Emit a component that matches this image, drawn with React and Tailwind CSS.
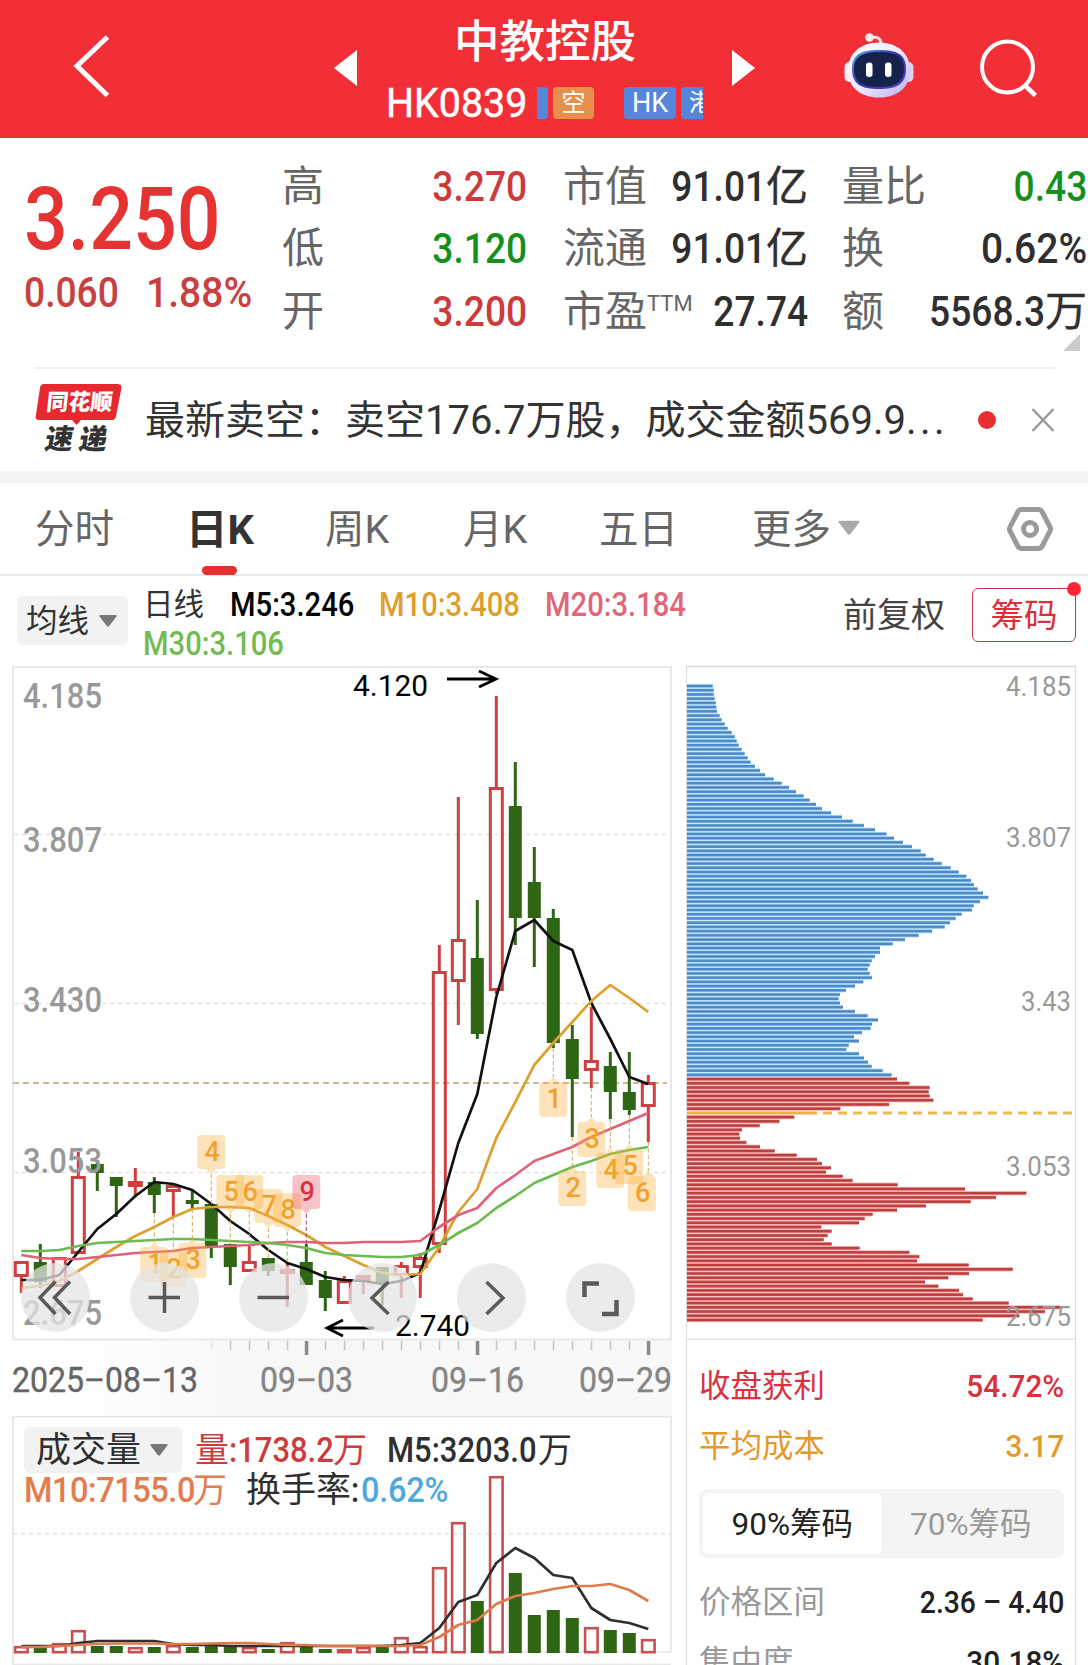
import clsx from 'clsx';

const STEP = 19;
const FIRST_X = 21.3;
const cx = (i) => FIRST_X + i * STEP;

// [up, high, bodyTop, bodyBottom, low]
const candles = [
    [1, 1261, 1261, 1277, 1293],
    [0, 1244, 1262, 1282, 1288],
    [1, 1257, 1257, 1287, 1287],
    [1, 1152, 1176, 1254, 1254],
    [0, 1160, 1164, 1173, 1191],
    [0, 1177, 1177, 1186, 1217],
    [1, 1168, 1181, 1187, 1197],
    [0, 1177, 1182, 1195, 1213],
    [1, 1185, 1185, 1192, 1217],
    [0, 1191, 1200, 1204, 1209],
    [0, 1204, 1204, 1246, 1258],
    [0, 1244, 1244, 1267, 1285],
    [1, 1246, 1261, 1272, 1272],
    [0, 1258, 1258, 1271, 1276],
    [1, 1262, 1269, 1272, 1307],
    [0, 1244, 1262, 1285, 1285],
    [0, 1271, 1280, 1298, 1311],
    [1, 1276, 1280, 1304, 1304],
    [1, 1275, 1275, 1281, 1294],
    [0, 1267, 1267, 1284, 1305],
    [1, 1262, 1265, 1276, 1298],
    [1, 1253, 1257, 1268, 1298],
    [1, 945, 971, 1245, 1253],
    [1, 797, 939, 982, 1025],
    [0, 900, 958, 1034, 1039],
    [1, 696, 787, 991, 994],
    [0, 762, 806, 918, 945],
    [0, 847, 882, 918, 967],
    [0, 909, 918, 1043, 1048],
    [0, 1025, 1039, 1079, 1137],
    [1, 1007, 1060, 1071, 1088],
    [0, 1052, 1066, 1092, 1119],
    [0, 1052, 1092, 1110, 1115],
    [1, 1075, 1082, 1107, 1142],
];

const ma5 = [1280, 1280, 1275, 1252, 1229, 1214, 1196, 1182, 1184, 1190, 1204, 1221, 1234, 1250, 1263, 1269, 1277, 1280, 1281, 1284, 1281, 1273, 1210, 1143, 1094, 997, 931, 920, 941, 950, 1003, 1039, 1077, 1084];
const ma10 = [1288, 1286, 1281, 1271, 1259, 1247, 1236, 1227, 1217, 1209, 1207, 1207, 1208, 1216, 1225, 1235, 1247, 1256, 1265, 1273, 1275, 1274, 1247, 1212, 1189, 1138, 1102, 1065, 1043, 1022, 1001, 985, 998, 1012];
const ma20 = [1255, 1258, 1259, 1259, 1257, 1255, 1253, 1252, 1251, 1248, 1247, 1246, 1245, 1243, 1242, 1242, 1243, 1243, 1242, 1242, 1242, 1241, 1227, 1215, 1208, 1188, 1175, 1161, 1154, 1147, 1137, 1129, 1121, 1113];
const ma30 = [1251, 1251, 1250, 1246, 1243, 1242, 1241, 1240, 1239, 1239, 1240, 1241, 1242, 1243, 1245, 1248, 1253, 1255, 1256, 1257, 1257, 1255, 1245, 1233, 1223, 1208, 1196, 1183, 1175, 1167, 1161, 1154, 1150, 1147];

const volumes = [1646, 1648, 1643, 1630, 1646, 1646, 1647, 1647, 1645, 1647, 1646, 1647, 1647, 1649, 1642, 1646, 1649, 1649, 1647, 1647, 1637, 1646, 1567, 1522, 1601, 1476, 1573, 1615, 1610, 1618, 1627, 1630, 1633, 1639];
const vol5 = [1646, 1646, 1646, 1643, 1641, 1641, 1641, 1641, 1644, 1645, 1645, 1646, 1646, 1646, 1646, 1646, 1646, 1646, 1646, 1646, 1645, 1643, 1628, 1602, 1595, 1563, 1548, 1558, 1575, 1578, 1608, 1620, 1623, 1629];
const vol10 = [1647, 1647, 1646, 1645, 1644, 1643.5, 1643.5, 1643.5, 1644, 1644, 1643.5, 1643, 1643, 1644, 1645, 1645, 1646, 1646, 1646, 1646, 1646, 1645, 1637, 1625, 1620, 1604, 1596, 1593, 1589, 1586, 1586, 1584, 1590, 1601];

// chip distribution, one entry per price level
const chips = [
    98, 101, 101, 104, 107, 109, 111, 119, 125, 134, 143, 155, 164, 170, 176, 185, 194, 203, 212, 225,
    240, 255, 281, 305, 327, 348, 371, 389, 408, 426, 453, 486, 518, 552, 585, 620, 642, 669, 696, 722,
    737, 761, 785, 812, 836, 859, 873, 882, 893, 909, 925, 900, 881, 876, 845, 827, 810, 794, 756, 716,
    675, 638, 600, 600, 585, 575, 569, 563, 569, 576, 550, 525, 498, 480, 476, 480, 489, 525, 563, 594,
    576, 572, 546, 522, 537, 506, 499, 537, 552, 564, 575, 608, 635, 651, 688, 749, 746, 749, 760, 627,
    481, 410, 343, 298, 239, 186, 178, 180, 199, 240, 284, 350, 411, 426, 453, 438, 488, 518, 653, 855,
    1039, 948, 872, 738, 651, 578, 554, 537, 424, 455, 443, 431, 455, 539, 688, 718, 711, 866, 998, 867,
    805, 735, 775, 837, 849, 878, 986, 1140, 1095, 1018, 908,
];
const CHIP_TOP = 686;
const CHIP_STEP = 4.2267;
const LAST_BLUE = 92;

// [label, candle index, box top, direction, offset]
const marks = [
    ['1', 7, 1247, 'up'],
    ['2', 8, 1252, 'up'],
    ['3', 9, 1243, 'up'],
    ['4', 10, 1135, 'down'],
    ['5', 11, 1175, 'down'],
    ['6', 12, 1175, 'down'],
    ['7', 13, 1189, 'down'],
    ['8', 14, 1193, 'down'],
    ['9', 15, 1175, 'down'],
    ['1', 28, 1082, 'up'],
    ['2', 29, 1171, 'up'],
    ['3', 30, 1122, 'up'],
    ['4', 31, 1153, 'up'],
    ['5', 32, 1149, 'up'],
    ['6', 33, 1176, 'up', -6.5],
];

const toPoints = (ys) => ys.map((y, i) => `${cx(i)},${y}`).join(' ');

const Num = ({ className, right, wide, children }) => (
    <span className={clsx('inline-flex whitespace-nowrap', right && 'justify-end', className)}>
        <span
            className={clsx(
                'inline-block',
                wide ? 'scale-x-[0.93]' : 'scale-x-[0.885]',
                right ? 'origin-right' : 'origin-left'
            )}
        >
            {children}
        </span>
    </span>
);

const Caret = ({ className }) => (
    <svg viewBox="0 0 18 12" className={className} fill="currentColor">
        <path d="M1 0H17Q18 .6 17.4 1.6L10 11.2Q9 12 8 11.2L.6 1.6Q0 .6 1 0Z" />
    </svg>
);

const Header = () => (
    <header className="flex h-[138px] shrink-0 items-start bg-[#f22f37] text-white">
        <svg viewBox="0 0 40 66" className="ml-[72px] mt-[33px] h-[66px] w-10" fill="none" stroke="white" strokeWidth="5">
            <path d="M35.500 4L5 33L35.500 62.500" />
        </svg>
        <svg viewBox="0 0 23 36" className="ml-[222px] mt-[50px] h-9 w-[23px]" fill="white">
            <path d="M0 18L23 0V36Z" />
        </svg>
        <div className="ml-[29px] flex w-[318px] flex-col items-center">
            <h1 className="mt-[19px] text-[45.500px] leading-[48px] font-medium">中教控股</h1>
            <div className="mt-[20px] flex h-8 w-full items-center">
                <span className="inline-block w-[151px] whitespace-nowrap text-[41px] leading-8">
                    <span className="inline-block origin-left scale-x-[0.96] [-webkit-text-stroke:0.5px_white]">HK0839</span>
                </span>
                <div className="flex w-[166px] overflow-hidden text-[24px] leading-8">
                    <span className="h-8 w-[11px] shrink-0 rounded-r-sm bg-[#5486db]" />
                    <span className="ml-[5px] h-8 w-[41px] shrink-0 rounded-sm bg-[#e88f4c] text-center">空</span>
                    <span className="ml-[30px] h-8 w-[52px] shrink-0 rounded-sm bg-[#5486db] text-center text-[27px]">HK</span>
                    <span className="ml-[5px] h-8 w-[60px] shrink-0 rounded-sm bg-[#5486db] pl-2">港</span>
                </div>
            </div>
        </div>
        <svg viewBox="0 0 23 36" className="ml-[28px] mt-[50px] h-9 w-[23px]" fill="white">
            <path d="M23 18L0 0V36Z" />
        </svg>
        <svg viewBox="0 0 70 66" className="ml-[89px] mt-[32px] h-[66px] w-[70px]">
            <defs>
                <linearGradient id="shell" x1="0" y1="0" x2="1" y2="1">
                    <stop offset="0" stopColor="#ffffff" />
                    <stop offset=".5" stopColor="#f0eafc" />
                    <stop offset="1" stopColor="#b9aef0" />
                </linearGradient>
                <linearGradient id="rim" x1="0" y1="0" x2="1" y2="1">
                    <stop offset="0" stopColor="#4fa9dd" />
                    <stop offset=".5" stopColor="#3b2fae" />
                    <stop offset="1" stopColor="#5a3fc4" />
                </linearGradient>
            </defs>
            <path d="M26 6C33 4 37 6 37 12" fill="none" stroke="#f6dfe6" strokeWidth="3" />
            <circle cx="25.500" cy="5.500" r="4.300" fill="#fbe9ee" />
            <rect x="0.500" y="30" width="10" height="20" rx="5" fill="#f3ecfb" />
            <rect x="59.500" y="30" width="10" height="20" rx="5" fill="#d9d2f6" />
            <path d="M35 10.500C54 10.500 66 22 66 38C66 55 54 65.500 35 65.500C16 65.500 4 55 4 38C4 22 16 10.500 35 10.500Z" fill="url(#shell)" />
            <path d="M35 18C54 18 62 23 62 37C62 52 53 57 35 57C17 57 8 52 8 37C8 23 16 18 35 18Z" fill="url(#rim)" />
            <path d="M35 20C52 20 60 25 60 37C60 50 51 55 35 55C19 55 10 50 10 37C10 25 18 20 35 20Z" fill="#15234a" />
            <rect x="22" y="30.500" width="6.500" height="14.500" rx="3" fill="white" />
            <rect x="41" y="30.500" width="6.500" height="14.500" rx="3" fill="white" />
        </svg>
        <svg viewBox="0 0 60 60" className="ml-[65px] mt-[38px] h-[60px] w-[60px]" fill="none" stroke="white" strokeWidth="4">
            <circle cx="28.500" cy="29" r="25.500" />
            <path d="M46 47.500L56.500 57.500" strokeWidth="4.500" />
        </svg>
    </header>
);

const Stat = ({ label, sup, value, unit, wide, tone = 'text-[#2f2f2f]' }) => (
    <div className="flex h-[62.500px] items-center justify-between">
        <span className="flex text-[42px] text-[#666]">
            {label}
            {sup && <span className="mt-[7px] text-[22px]">{sup}</span>}
        </span>
        <span className={clsx('flex items-baseline text-[42px] font-medium', tone)}>
            <Num right wide={wide}>{value}</Num>
            {unit && <span className="text-[42px] font-normal [-webkit-text-stroke:0.4px_#2f2f2f]">{unit}</span>}
        </span>
    </div>
);

const Quote = () => (
    <section className="relative flex h-[229px] shrink-0 pt-[17px]">
        <div className="w-[282px] pl-[24px] font-medium">
            <div className="mt-[21px] h-[86px] text-[87px] leading-[86px] text-[#e53232]">
                <Num>3.250</Num>
            </div>
            <div className="mt-[6px] flex text-[42px] leading-[50px] text-[#c94040]">
                <Num className="w-[122px]">0.060</Num>
                <Num wide className="w-[102px]">1.88%</Num>
            </div>
        </div>
        <div className="w-[245px]">
            <Stat label="高" value="3.270" tone="text-[#cc3b3b]" />
            <Stat label="低" value="3.120" tone="text-[#14901b]" />
            <Stat label="开" value="3.200" tone="text-[#cc3b3b]" />
        </div>
        <div className="ml-9 w-[245px]">
            <Stat label="市值" value="91.01" unit="亿" />
            <Stat label="流通" value="91.01" unit="亿" />
            <Stat label="市盈" sup="TTM" value="27.74" />
        </div>
        <div className="ml-[34px] w-[245px]">
            <Stat label="量比" value="0.43" tone="text-[#14901b]" />
            <Stat label="换" value="0.62%" wide />
            <Stat label="额" value="5568.3" unit="万" />
        </div>
        <svg viewBox="0 0 17 17" className="absolute right-2 top-[196px] h-[17px] w-[17px]" fill="#cccccc">
            <path d="M17 0V17H0Z" />
        </svg>
    </section>
);

const News = () => (
    <section className="ml-[35px] mr-[33px] flex h-[104px] shrink-0 items-center border-t-2 border-[#efefef]">
        <svg viewBox="0 0 88 76" className="-mt-1 h-[76px] w-[88px] shrink-0 overflow-visible font-['Noto_Sans_CJK_SC',sans-serif]">
            <path d="M9 4H82Q87 4 86.500 8L81 36Q80.500 40 77 40H46L41.500 45L37 40H4Q0 40 .8 36L5 8Q5.500 4 9 4Z" fill="#e5292e" />
            <text x="14" y="30.500" transform="skewX(-6)" fill="white" fontSize="22.500" fontWeight="900" textLength="66" lengthAdjust="spacingAndGlyphs">同花顺</text>
            <text x="21" y="69" transform="skewX(-10)" fill="#333" fontSize="28" fontWeight="900">速</text>
            <text x="55" y="69" transform="skewX(-10)" fill="#333" fontSize="28" fontWeight="900">递</text>
        </svg>
        <p className="ml-[22px] mt-[2px] flex-1 whitespace-nowrap text-[40px] leading-[60px] text-[#333]">
            最新卖空：卖空176.7万股，成交金额569.9<span className="tracking-[3.500px]">...</span>
        </p>
        <span className="mr-[35px] h-[18px] w-[18px] shrink-0 rounded-full bg-[#e83030]" />
        <svg viewBox="0 0 24 24" className="h-6 w-6 shrink-0" fill="none" stroke="#999" strokeWidth="2.500">
            <path d="M1.500 1L22.500 23M22.500 1L1.500 23" />
        </svg>
    </section>
);

const Tabs = () => (
    <nav className="flex h-[93px] shrink-0 items-center border-b-2 border-[#e8e8e8] pl-[35px] text-[39.500px] text-[#666]">
        <span className="mt-[3px] w-[151px]">分时</span>
        <span className="relative mt-[3px] w-[139px] text-[41.500px] font-bold text-[#333]">
            日K
            <i className="absolute -bottom-[14px] left-4 h-[9px] w-[35px] rounded-full bg-[#e53030]" />
        </span>
        <span className="mt-[3px] w-[138px]">周K</span>
        <span className="mt-[3px] w-[136px]">月K</span>
        <span className="mt-[3px] w-[153px]">五日</span>
        <span className="mt-[3px] w-[86px]">更多</span>
        <Caret className="h-[18px] w-[22px] -mt-[2px] text-[#aaa]" />
        <svg viewBox="0 0 46 44" className="ml-[147px] h-11 w-[46px]" fill="none" stroke="#9a9a9a" strokeWidth="5" strokeLinejoin="round">
            <path d="M14 2.500H32Q34 3 35 4.500L43 20Q44 22 43 24L35 39.500Q34 41 32 41.500H14Q12 41 11 39.500L3 24Q2 22 3 20L11 4.500Q12 3 14 2.500Z" />
            <circle cx="23" cy="22" r="6.500" />
        </svg>
    </nav>
);

const Averages = () => (
    <section className="flex h-[84px] shrink-0">
        <button className="ml-[17px] mt-5 flex h-[49px] w-[111px] items-center gap-[10px] rounded-md bg-[#f2f2f2] pl-[9px] text-[31.500px] text-[#333]">
            <span className="mt-[2px]">均线</span>
            <Caret className="h-3 w-[18px] text-[#777]" />
        </button>
        <div className="ml-[15px] mt-[9px] w-[700px] text-[33px] leading-[39px] font-medium">
            <div className="flex">
                <span className="w-[87px] text-[30.500px] font-normal text-[#333]">日线</span>
                <Num className="w-[149px] text-black">M5:3.246</Num>
                <Num className="w-[166px] text-[#dda02c]">M10:3.408</Num>
                <Num className="text-[#e0667a]">M20:3.184</Num>
            </div>
            <Num className="text-[#72bb54]">M30:3.106</Num>
        </div>
        <span className="mt-[15px] w-[129px] text-[34px] leading-[48px] text-[#444]">前复权</span>
        <button className="relative mt-3 h-[54px] w-[104px] rounded-md border border-[#c03a44] pt-[2px] text-[33.500px] leading-[50px] text-[#dc2f3c]">
            筹码
            <i className="absolute -right-[6px] -top-[7px] h-[14px] w-[14px] rounded-full bg-[#ff2535]" />
        </button>
    </section>
);

const Candle = ({ x, data: [up, high, top, bottom, low] }) =>
    up ? (
        <g stroke="#cf3f3f" strokeWidth="3" fill="none">
            <path d={`M${x} ${high}V${top}M${x} ${bottom}V${low}`} />
            <rect x={x - 6} y={top + 1.5} width="12" height={Math.max(bottom - top - 3, 2)} />
        </g>
    ) : (
        <g fill="#2f6614">
            <rect x={x - 1.5} y={high} width="3" height={low - high} />
            <rect x={x - 6.5} y={top} width="13" height={bottom - top} />
        </g>
    );

const Mark = ({ label, i, top, dir, shift = 0 }) => {
    const x = cx(i);
    const left = x - 14 + shift;
    const hot = label === '9';
    const fill = hot ? '#ea5b6c' : '#fbb040';
    const up = dir === 'up';
    return (
        <g>
            <path
                d={up ? `M${x} ${candles[i][4]}V${top - 5}` : `M${x} ${top + 39}V${candles[i][1]}`}
                stroke={hot ? '#b04050' : '#d5a64a'}
                strokeDasharray="4 2.5"
            />
            <g fill={fill} opacity={0.37}>
                <path
                    d={
                        up
                            ? `M${left + 4} ${top}H${x - 5}L${x} ${top - 5}L${x + 5} ${top}H${left + 24}Q${left + 28} ${top} ${left + 28} ${top + 4}V${top + 31}Q${left + 28} ${top + 35} ${left + 24} ${top + 35}H${left + 4}Q${left} ${top + 35} ${left} ${top + 31}V${top + 4}Q${left} ${top} ${left + 4} ${top}Z`
                            : `M${left + 4} ${top}H${left + 24}Q${left + 28} ${top} ${left + 28} ${top + 4}V${top + 30}Q${left + 28} ${top + 34} ${left + 24} ${top + 34}H${x + 5}L${x} ${top + 39}L${x - 5} ${top + 34}H${left + 4}Q${left} ${top + 34} ${left} ${top + 30}V${top + 4}Q${left} ${top} ${left + 4} ${top}Z`
                    }
                />
            </g>
            <text x={left + 15} y={top + 26} textAnchor="middle" fontSize="27" fontWeight="500" fill={hot ? '#d8343f' : '#f0a22e'}>
                {label}
            </text>
        </g>
    );
};

const ToolButton = ({ children }) => (
    <button className="flex h-[69px] w-[69px] items-center justify-center rounded-full bg-[#e4e4e4]/75">
        <svg viewBox="0 0 69 69" className="h-full w-full" fill="none" stroke="#5a5a5a" strokeWidth="3.500">
            {children}
        </svg>
    </button>
);

const PriceChart = () => (
    <div className="relative h-[756px]">
        <svg viewBox="0 660 686 756" className="block h-[756px] w-[686px]">
            <defs>
                <linearGradient id="axis" x1="0" x2="1">
                    <stop offset="0.050" stopColor="#ffffff" />
                    <stop offset="0.400" stopColor="#f7f7f7" />
                    <stop offset="1" stopColor="#f8f8f8" />
                </linearGradient>
            </defs>
            <rect x="13" y="1340" width="659" height="76" fill="url(#axis)" />
            <rect x="13" y="667" width="658" height="672.500" fill="white" stroke="#e8e8e8" strokeWidth="2" />
            <g stroke="#e4e4e4" strokeWidth="1.500" strokeDasharray="4 4">
                <path d="M14 834.500H670M14 1003.500H670M14 1172.500H670" />
            </g>
            <path d="M13 1083H667" stroke="#bba26b" strokeWidth="1.600" strokeDasharray="6 4" />

            {candles.map((c, i) => (
                <Candle key={i} x={cx(i)} data={c} />
            ))}

            <g fill="#999" fontSize="35" fontWeight="500">
                <text x="23" y="708" textLength="79" lengthAdjust="spacingAndGlyphs">4.185</text>
                <text x="23" y="852" textLength="79" lengthAdjust="spacingAndGlyphs">3.807</text>
                <text x="23" y="1012" textLength="79" lengthAdjust="spacingAndGlyphs">3.430</text>
                <text x="23" y="1173" textLength="79" lengthAdjust="spacingAndGlyphs">3.053</text>
                <text x="23" y="1325" textLength="79" lengthAdjust="spacingAndGlyphs">2.675</text>
            </g>

            <g fill="none" strokeWidth="2.700" strokeLinejoin="round">
                <polyline points={toPoints(ma5)} stroke="#111" />
                <polyline points={toPoints(ma10)} stroke="#dca030" />
                <polyline points={toPoints(ma20)} stroke="#df6378" />
                <polyline points={toPoints(ma30)} stroke="#6cbb50" />
            </g>

            {marks.map(([label, i, top, dir, shift], k) => (
                <Mark key={k} label={label} i={i} top={top} dir={dir} shift={shift} />
            ))}

            <g fill="black" fontSize="29.500">
                <text x="353" y="696" textLength="75" lengthAdjust="spacingAndGlyphs">4.120</text>
                <text x="395" y="1336" textLength="75" lengthAdjust="spacingAndGlyphs">2.740</text>
            </g>
            <g fill="none" stroke="black" strokeWidth="2.800">
                <path d="M447 679H496M479 671L496 679L479 687" />
                <path d="M374 1328H327M343 1320L327 1328L343 1336" />
            </g>

            {candles.map((_, i) => {
                if (i < 10) return null;
                const major = i === 15 || i === 24 || i === 33;
                return (
                    <rect
                        key={i}
                        x={cx(i) - (major ? 1.5 : 0.5)}
                        y="1341"
                        width={major ? 3.5 : 1.5}
                        height={major ? 14 : 9}
                        fill={major ? '#8a8a8a' : i === 10 ? '#e6e6e6' : '#c4c4c4'}
                    />
                );
            })}
            <g fontSize="35" fill="#858585" stroke="#858585" strokeWidth="0.400">
                <text x="12" y="1392" textLength="186" lengthAdjust="spacingAndGlyphs" fill="#666" stroke="#666">2025–08–13</text>
                <text x="260" y="1392" textLength="93" lengthAdjust="spacingAndGlyphs">09–03</text>
                <text x="431" y="1392" textLength="93" lengthAdjust="spacingAndGlyphs">09–16</text>
                <text x="579" y="1392" textLength="93" lengthAdjust="spacingAndGlyphs">09–29</text>
            </g>
        </svg>
        {/* Zoom and pan controls */}
        <div className="absolute left-[21px] top-[603px] flex gap-10">
            <ToolButton>
                <path d="M34.500 18.500L19 34.500L34.500 51M49 18.500L33.500 34.500L49 51" />
            </ToolButton>
            <ToolButton>
                <path d="M18.500 34.500H50M34.500 19V50" />
            </ToolButton>
            <ToolButton>
                <path d="M18.500 34.500H50" />
            </ToolButton>
            <ToolButton>
                <path d="M40.500 19L24 35L40.500 51" />
            </ToolButton>
            <ToolButton>
                <path d="M29.500 19L46 35L29.500 51" />
            </ToolButton>
            <ToolButton>
                <path d="M18.500 34V20.500H33M36 51H50.500V37" strokeWidth="4.500" />
            </ToolButton>
        </div>
    </div>
);

const VolumeChart = () => (
    <div className="relative h-[249px]">
        <svg viewBox="0 1416 686 249" className="block h-[249px] w-[686px]">
            <path d="M13 1652H671" stroke="#e8e8e8" strokeWidth="1.500" />
            <path d="M13 1665V1416.500H671V1652" fill="none" stroke="#e8e8e8" strokeWidth="2" />
            <path d="M13 1664.500H671" stroke="#e8e8e8" strokeWidth="2" />
            <path d="M13 1534H671" stroke="#e4e4e4" strokeWidth="1.500" strokeDasharray="4 4" />
            {volumes.map((top, i) =>
                candles[i][0] ? (
                    <rect key={i} x={cx(i) - 6.2} y={top + 1.2} width="12.500" height={Math.max(1651 - top, 2)} fill="none" stroke="#c75050" strokeWidth="2.600" />
                ) : (
                    <rect key={i} x={cx(i) - 6.5} y={top} width="13" height={1653 - top} fill="#2f6614" />
                )
            )}
            <g fill="none" strokeWidth="2.700" strokeLinejoin="round">
                <polyline points={toPoints(vol5)} stroke="#2f2f2f" />
                <polyline points={toPoints(vol10)} stroke="#df7a4c" />
            </g>
        </svg>
        <div className="absolute left-6 top-[11px] text-[35px] font-medium text-[#2f2f2f]">
            <div className="flex h-[46px] items-center">
                <button className="flex h-[46px] w-[158px] items-center gap-[9px] rounded-md bg-[#f2f2f2] pl-[12px] font-normal">
                    <span className="mt-[2px]">成交量</span>
                    <Caret className="h-3 w-[18px] text-[#777]" />
                </button>
                <span className="ml-[13px] mt-[2px] flex text-[#cb3d3d]">
                    <span className="text-[34px] font-normal">量</span>
                    <Num className="w-[104px]">:1738.2</Num>
                    <span className="text-[34px] font-normal">万</span>
                </span>
                <span className="ml-[20px] mt-[2px] flex">
                    <Num className="w-[151px]">M5:3203.0</Num>
                    <span className="text-[34px] font-normal">万</span>
                </span>
            </div>
            <div className="-mt-[5px] flex h-[46px] items-center">
                <span className="flex text-[#e37c4e]">
                    <Num wide className="w-[169px] tracking-[-0.500px]">M10:7155.0</Num>
                    <span className="text-[34px] font-normal">万</span>
                </span>
                <span className="ml-[19px] font-normal">换手率</span>
                <Num className="w-[10px]">:</Num>
                <Num wide className="tracking-[-0.300px] text-[#4fa8dc]">0.62%</Num>
            </div>
        </div>
    </div>
);

const ChipChart = () => (
    <svg viewBox="686 660 402 680" className="block h-[680px] w-[402px]">
        <path d="M686.500 1340V666.500H1075.500V1340M686.500 1339.500H1075.500" fill="none" stroke="#dedede" strokeWidth="1.300" />
        {chips.map((v, i) => {
            if (i === 101) return null;
            const y = CHIP_TOP + i * CHIP_STEP;
            const w = v / 3 - 7;
            const blue = i <= LAST_BLUE;
            return (
                <g key={i}>
                    <rect x="687" y={y - 2.1} width={w} height={CHIP_STEP} fill={blue ? '#b4e0fb' : '#fbb0b0'} />
                    <rect x="687" y={y - 1.3} width={w} height="2.600" fill={blue ? '#4f8ac8' : '#bb4040'} />
                </g>
            );
        })}
        <path d="M687 1113H817" stroke="#ecaf4e" strokeWidth="3.200" />
        <path d="M823 1113H1073" stroke="#edb84e" strokeWidth="3" strokeDasharray="9 6" />
        <g fill="#999" fontSize="27" textAnchor="end">
            <text x="1071" y="696" textLength="65" lengthAdjust="spacingAndGlyphs">4.185</text>
            <text x="1071" y="847" textLength="65" lengthAdjust="spacingAndGlyphs">3.807</text>
            <text x="1071" y="1011" textLength="50" lengthAdjust="spacingAndGlyphs">3.43</text>
            <text x="1071" y="1176" textLength="65" lengthAdjust="spacingAndGlyphs">3.053</text>
            <text x="1071" y="1326" textLength="65" lengthAdjust="spacingAndGlyphs">2.675</text>
        </g>
    </svg>
);

const ChipRow = ({ label, value, wide, className, labelClass }) => (
    <div className={clsx('flex h-[60px] items-center justify-between text-[32px]', className)}>
        <span className={clsx('mt-[2px] text-[31.500px]', labelClass)}>{label}</span>
        <Num right wide={wide} className="font-medium">{value}</Num>
    </div>
);

const ChipPanel = () => (
    <div className="w-[402px] shrink-0">
        <ChipChart />
        <div className="h-[360px] w-[390px] border-x border-[#dedede] pl-[12px] pr-[11px] pt-4">
            <ChipRow label="收盘获利" value="54.72%" wide className="text-[#d8323f]" />
            <ChipRow label="平均成本" value="3.17" wide className="text-[#e49a2a]" />
            <div className="mb-[14px] mt-[13px] flex h-[69px] rounded-lg bg-[#f4f4f4] p-1 text-[31.500px] leading-[64px]">
                <span className="h-[61px] w-[179px] rounded-md bg-white text-center text-[#222]">90%筹码</span>
                <span className="h-[61px] w-[179px] text-center text-[#999]">70%筹码</span>
            </div>
            <ChipRow label="价格区间" value="2.36 – 4.40" className="text-[#222]" labelClass="text-[#999]" />
            <ChipRow label="集中度" value="30.18%" wide className="text-[#222]" labelClass="text-[#999]" />
        </div>
    </div>
);

export default function App() {
    return (
        <main className="flex h-[1665px] w-[1088px] flex-col overflow-hidden bg-white font-['Roboto','Noto_Sans_CJK_SC',sans-serif]">
            <Header />
            <Quote />
            <News />
            <div className="h-3 shrink-0 bg-[#f4f4f4]" />
            <Tabs />
            <Averages />
            <div className="flex">
                <div className="w-[686px] shrink-0">
                    <PriceChart />
                    <VolumeChart />
                </div>
                <ChipPanel />
            </div>
        </main>
    );
}
